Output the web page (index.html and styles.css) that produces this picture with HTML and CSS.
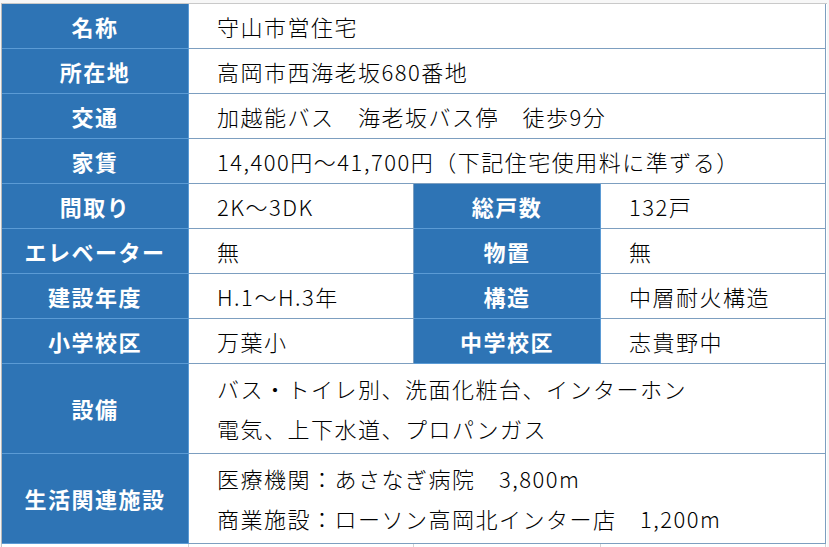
FILE: index.html
```html
<!DOCTYPE html>
<html lang="ja">
<head>
<meta charset="utf-8">
<title>守山市営住宅</title>
<link rel="stylesheet" href="styles.css">
</head>
<body>
<div class="sheet">
  <div class="table">
    <div class="th">名称</div>
    <div class="td wide">守山市営住宅</div>

    <div class="th">所在地</div>
    <div class="td wide">高岡市西海老坂680番地</div>

    <div class="th">交通</div>
    <div class="td wide">加越能バス　海老坂バス停　徒歩9分</div>

    <div class="th">家賃</div>
    <div class="td wide">14,400円～41,700円（下記住宅使用料に準ずる）</div>

    <div class="th">間取り</div>
    <div class="td">2K～3DK</div>
    <div class="th">総戸数</div>
    <div class="td">132戸</div>

    <div class="th">エレベーター</div>
    <div class="td">無</div>
    <div class="th">物置</div>
    <div class="td">無</div>

    <div class="th">建設年度</div>
    <div class="td">H.1～H.3年</div>
    <div class="th">構造</div>
    <div class="td">中層耐火構造</div>

    <div class="th">小学校区</div>
    <div class="td">万葉小</div>
    <div class="th">中学校区</div>
    <div class="td">志貴野中</div>

    <div class="th">設備</div>
    <div class="td wide multi">
      <span>バス・トイレ別、洗面化粧台、インターホン</span>
      <span>電気、上下水道、プロパンガス</span>
    </div>

    <div class="th">生活関連施設</div>
    <div class="td wide multi">
      <span>医療機関：あさなぎ病院　3,800m</span>
      <span>商業施設：ローソン高岡北インター店　1,200m</span>
    </div>
  </div>
  <div class="tail">
    <div class="tc"></div>
    <div class="tc"></div>
    <div class="tc"></div>
    <div class="tc"></div>
  </div>
</div>
</body>
</html>
```

FILE: styles.css
```css
html, body {
  margin: 0;
  padding: 0;
  background: #ffffff;
  font-family: "Noto Sans CJK JP", "Noto Sans", sans-serif;
}

.sheet {
  width: 829px;
  height: 547px;
  overflow: hidden;
  padding-top: 3px;
  padding-left: 1px;
  box-sizing: border-box;
  background: #f7f7f7;
}

.table {
  display: grid;
  grid-template-columns: 187px 225px 187px 225px;
  grid-template-rows: repeat(8, 45px) 90px 90px;
  border-top: 1px solid #c9c9c9;
  border-left: 1px solid #b9b9b9;
  width: 825px;
  background: #ffffff;
}

.th {
  box-sizing: border-box;
  background: #2e74b5;
  color: #ffffff;
  font-weight: 700;
  font-size: 22px;
  letter-spacing: 1.5px;
  display: flex;
  align-items: center;
  justify-content: center;
  border-right: 1px solid #5b9bd5;
  border-bottom: 1px solid #5b9bd5;
  padding-bottom: 1px;
}

.td {
  box-sizing: border-box;
  background: #ffffff;
  color: #000000;
  font-size: 22px;
  font-weight: 300;
  letter-spacing: 1.5px;
  display: flex;
  align-items: center;
  padding-left: 28px;
  border-right: 1px solid #7d9fc0;
  border-bottom: 1px solid #7d9fc0;
  white-space: nowrap;
  padding-bottom: 1px;
}

.wide {
  grid-column: span 3;
}

.multi {
  flex-direction: column;
  align-items: flex-start;
  justify-content: center;
  line-height: 40px;
}

.tail {
  display: grid;
  grid-template-columns: 187px 225px 187px 225px;
  width: 825px;
  height: 4px;
  background: #ffffff;
  border-left: 1px solid #c6c6c6;
}

.tc {
  border-right: 1px solid #d4d4d4;
}
```
